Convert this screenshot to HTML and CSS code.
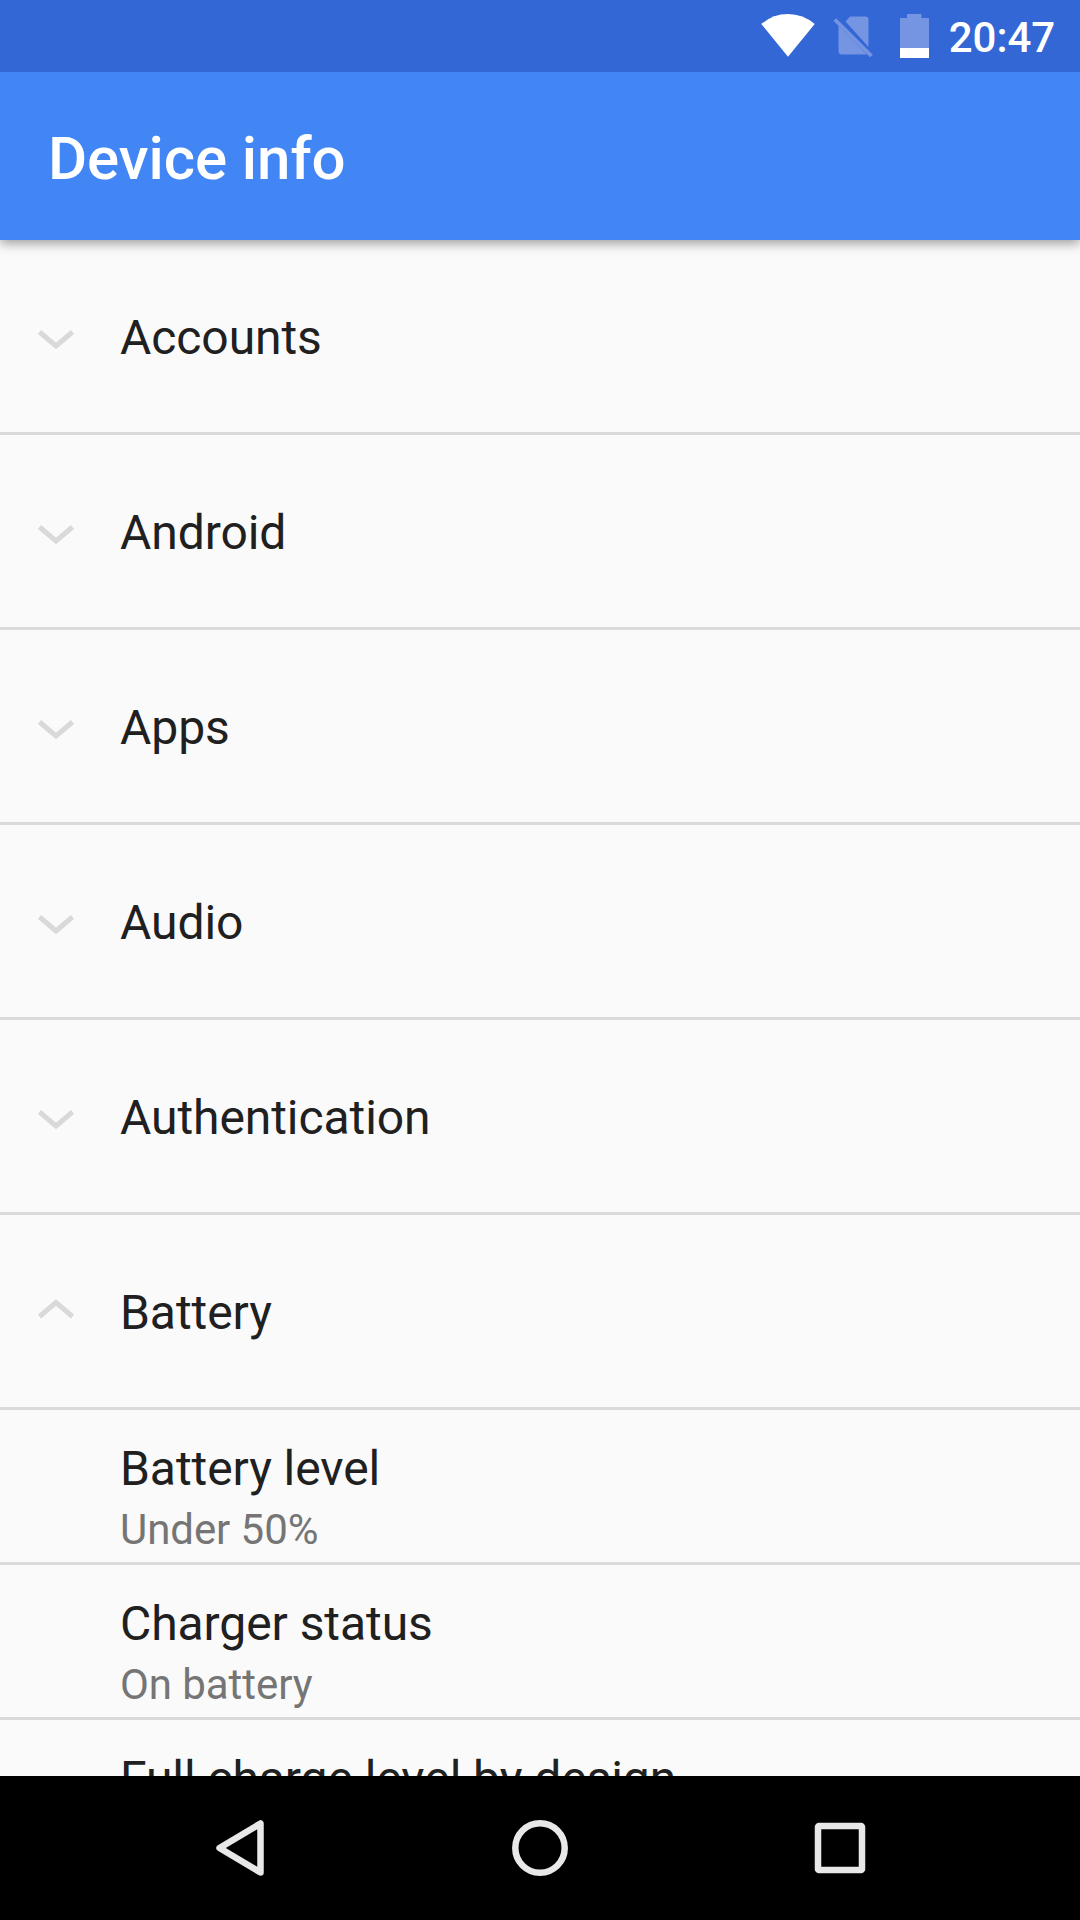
FILE: index.html
```
<!DOCTYPE html>
<html lang="en">
<head>
  <meta charset="UTF-8">
  <title>Device info</title>
  <link rel="stylesheet" href="styles.css">
</head>
<body>
  <div class="statusbar">
    <svg class="wifi" width="54" height="44" viewBox="0 0 54 44">
      <path d="M27 42.8L0.3 10Q12 0 27 0T53.7 10Z" fill="#fff"/>
    </svg>
    <svg class="sim" width="40" height="42" viewBox="0 0 40 42">
      <path d="M12.5 5.500L17 0.500H32.500Q35.500 0.500 35.500 3.500V31ZM5.500 9.500L34 38.500H9Q5.500 38.500 5.500 35Z" fill="#7594e2"/>
      <path d="M1.800 3.500L38.500 40" stroke="#7594e2" stroke-width="3.8"/>
    </svg>
    <svg class="batt" width="29" height="44" viewBox="0 0 29 44">
      <path d="M7 0H21.500V4H29V34H0V4H7Z" fill="#7594e2"/>
      <path d="M0 34H29V44H0Z" fill="#fff"/>
    </svg>
    <span class="clock">20:47</span>
  </div>

  <header class="appbar">
    <h1>Device info</h1>
  </header>

  <main class="list">
    <div class="group">
      <svg class="arrow" viewBox="0 0 36 24"><path d="M1.500 6L18 20L34.500 6"/></svg>
      <span>Accounts</span>
    </div>
    <div class="group">
      <svg class="arrow" viewBox="0 0 36 24"><path d="M1.500 6L18 20L34.500 6"/></svg>
      <span>Android</span>
    </div>
    <div class="group">
      <svg class="arrow" viewBox="0 0 36 24"><path d="M1.500 6L18 20L34.500 6"/></svg>
      <span>Apps</span>
    </div>
    <div class="group">
      <svg class="arrow" viewBox="0 0 36 24"><path d="M1.500 6L18 20L34.500 6"/></svg>
      <span>Audio</span>
    </div>
    <div class="group">
      <svg class="arrow" viewBox="0 0 36 24"><path d="M1.500 6L18 20L34.500 6"/></svg>
      <span>Authentication</span>
    </div>
    <div class="group">
      <svg class="arrow" viewBox="0 0 36 24"><path d="M1.500 15.500L18 1.500L34.500 15.500"/></svg>
      <span>Battery</span>
    </div>
    <div class="item">
      <div class="name">Battery level</div>
      <div class="value">Under 50%</div>
    </div>
    <div class="item">
      <div class="name">Charger status</div>
      <div class="value">On battery</div>
    </div>
    <div class="item">
      <div class="name">Full charge level by design</div>
    </div>
  </main>

  <nav class="navbar">
    <svg width="60" height="60" viewBox="0 0 60 60">
      <path d="M9.500 30L50.500 5.500V54.500Z"/>
    </svg>
    <svg width="60" height="60" viewBox="0 0 60 60">
      <circle cx="30" cy="30" r="24.700"/>
    </svg>
    <svg width="60" height="60" viewBox="0 0 60 60">
      <rect x="8" y="8" width="44" height="44" rx="1"/>
    </svg>
  </nav>
</body>
</html>
```
FILE: styles.css
```
* {
  box-sizing: border-box;
}

body {
  margin: 0;
  width: 1080px;
  height: 1920px;
  display: flex;
  flex-direction: column;
  overflow: hidden;
  background: #fafafa;
  color: #202020;
  font-family: Roboto, sans-serif;
  letter-spacing: -0.07px;
}

.statusbar {
  flex: none;
  height: 72px;
  padding: 14px 25px 0 0;
  display: flex;
  justify-content: flex-end;
  align-items: flex-start;
  background: #3367d6;
  position: relative;
  z-index: 2;
}

.wifi {
  margin-right: 18px;
}

.sim {
  margin: 2px 27px 0 0;
}

.batt {
  margin-right: 20px;
}

.clock {
  color: #fff;
  font-size: 42px;
  font-weight: 500;
  line-height: 48px;
}

.appbar {
  flex: none;
  height: 168px;
  padding: 5px 48px 0;
  display: flex;
  align-items: center;
  background: #4285f4;
  box-shadow: 0 4px 10px rgba(0, 0, 0, 0.35);
  position: relative;
  z-index: 1;
}

h1 {
  margin: 0;
  color: #fff;
  font-size: 60px;
  font-weight: 500;
}

.list {
  flex: 1;
  min-height: 0;
  overflow: hidden;
}

.group {
  height: 195px;
  padding: 3px 0 0 38px;
  display: flex;
  align-items: center;
  border-bottom: 3px solid #dadada;
  font-size: 48px;
}

.arrow {
  width: 36px;
  height: 24px;
  margin-right: 46px;
  overflow: visible;
  fill: none;
  stroke: #d9d9d9;
  stroke-width: 5;
}

.item {
  height: 155px;
  padding: 31px 0 0 120px;
  border-bottom: 3px solid #dadada;
}

.name {
  font-size: 48px;
  line-height: 56px;
}

.value {
  margin-top: 8px;
  color: #757575;
  font-size: 42px;
  line-height: 50px;
}

.navbar {
  flex: none;
  height: 144px;
  display: flex;
  justify-content: center;
  align-items: center;
  gap: 240px;
  background: #000;
}

.navbar svg {
  fill: none;
  stroke: #e8e8e8;
  stroke-width: 6.5;
  stroke-linejoin: round;
}
```
